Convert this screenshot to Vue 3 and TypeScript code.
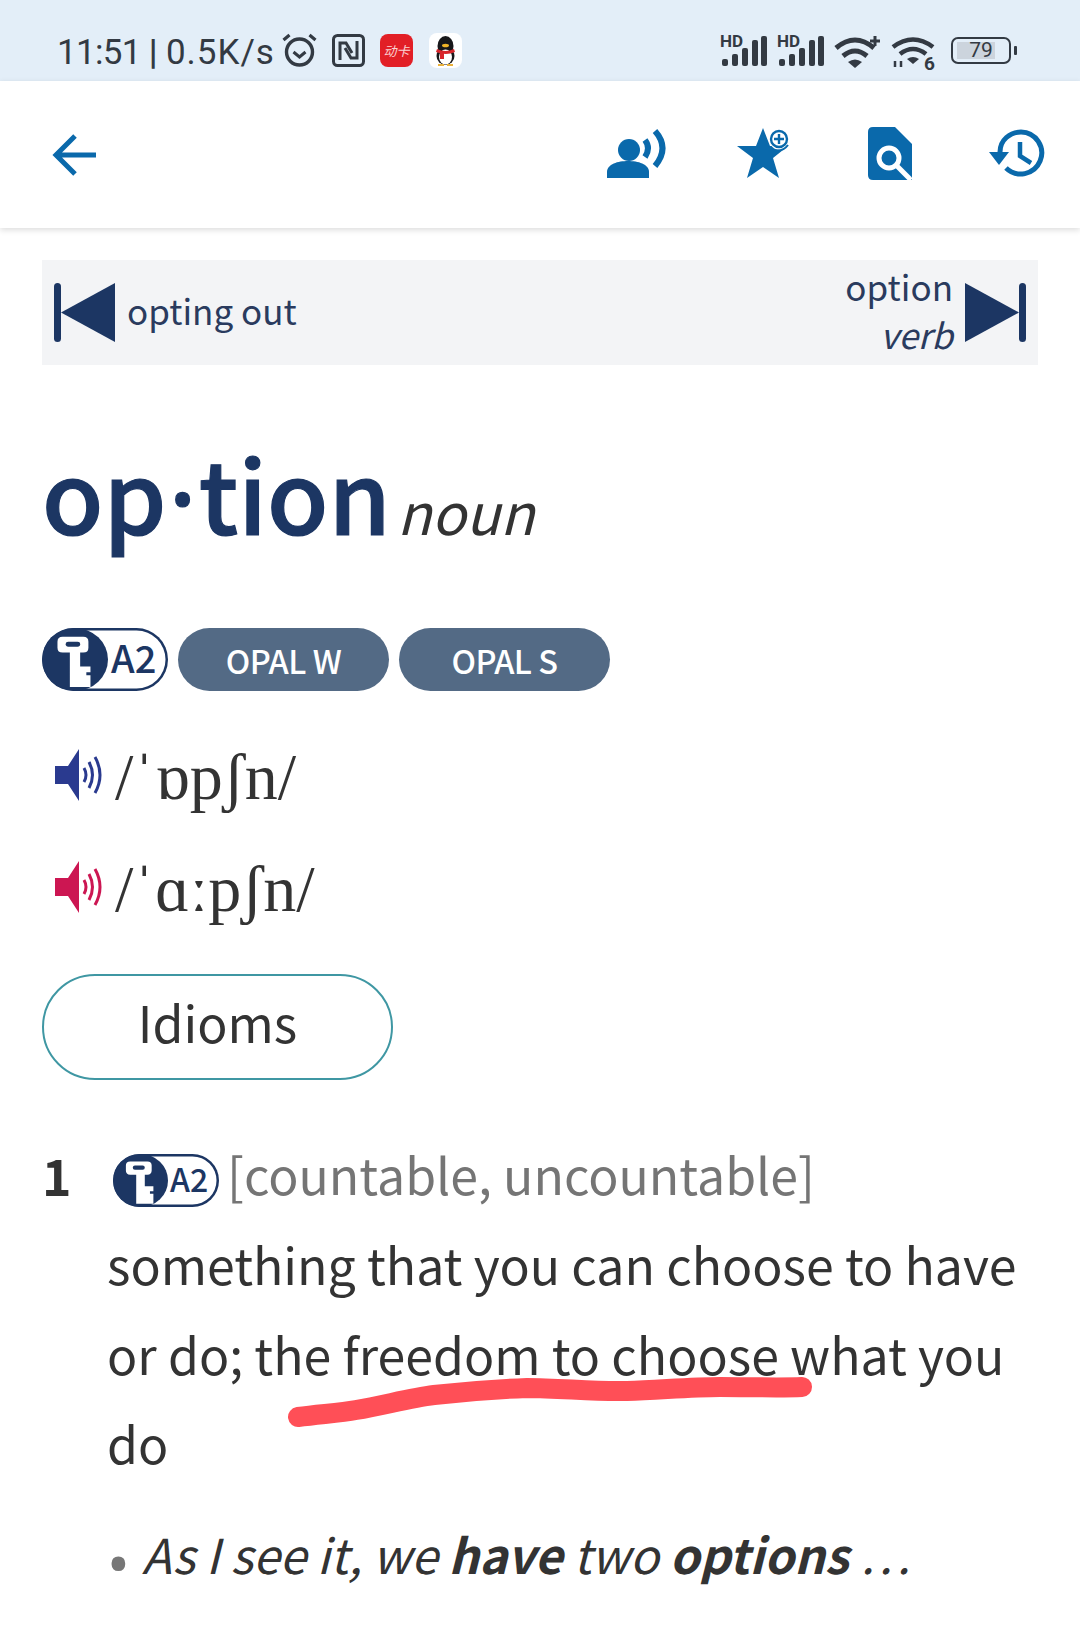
<script setup lang="ts">
const tags = ["OPAL W", "OPAL S"];

const prons = [
  { text: "/ˈɒpʃn/", color: "#2a3a8f" },
  { text: "/ˈɑːpʃn/", color: "#cc1652" },
];
</script>

<template>
  <div class="page">
    <div class="status">
      <span class="clock"><span class="time">11:51</span> <b>|</b> <span class="rate">0.5K/s</span></span>
      <svg class="alarm" width="37" height="36" viewBox="0 0 36 36" fill="none" stroke="#333a43">
        <circle cx="18" cy="20" r="13" stroke-width="3.4" />
        <path d="M12 20l6 5 6-5" stroke-width="3" />
        <path d="M2 8l6-5M34 8l-6-5" stroke-width="3.2" />
      </svg>
      <svg class="nfc" width="33" height="33" viewBox="0 0 33 33" fill="none" stroke="#333a43" stroke-width="3">
        <rect x="1.5" y="1.5" width="30" height="30" rx="4" />
        <path d="M8 26V9h6l6 10M25 7v17h-6l-6-10" />
      </svg>
      <span class="app-red">动卡</span>
      <svg class="qq" width="33" height="35" viewBox="0 0 33 35">
        <rect width="33" height="35" rx="8" fill="#fff" />
        <ellipse cx="16.5" cy="13" rx="8" ry="10" fill="#17171a" />
        <ellipse cx="16.5" cy="23" rx="9" ry="9" fill="#17171a" />
        <ellipse cx="16.5" cy="24" rx="6.5" ry="7.5" fill="#fff" />
        <path d="M8 16q8.500 4 17 0l1 3q-9 4-19 0z" fill="#d8252b" />
        <path d="M11 19h4v7h-4z" fill="#d8252b" />
        <ellipse cx="16.500" cy="12.500" rx="3.500" ry="1.800" fill="#f0b428" />
        <path d="M9 32h6M18 32h6" stroke="#e9b13b" stroke-width="2" />
      </svg>

      <div class="status-right">
        <svg class="signal" width="48" height="43" viewBox="0 -8 48 43">
          <text x="0" y="13" class="hd">HD</text>
          <g fill="#333a43">
            <rect x="2" y="25" width="6" height="7" rx="2" />
            <rect x="12" y="20" width="6" height="12" rx="2" />
            <rect x="22" y="14" width="6" height="18" rx="2" />
            <rect x="32" y="6" width="6" height="26" rx="2" />
            <rect x="41" y="2" width="6" height="30" rx="2" />
          </g>
        </svg>
        <svg class="signal" width="48" height="43" viewBox="0 -8 48 43">
          <text x="0" y="13" class="hd">HD</text>
          <g fill="#333a43">
            <rect x="2" y="25" width="6" height="7" rx="2" />
            <rect x="12" y="20" width="6" height="12" rx="2" />
            <rect x="22" y="14" width="6" height="18" rx="2" />
            <rect x="32" y="6" width="6" height="26" rx="2" />
            <rect x="41" y="2" width="6" height="30" rx="2" />
          </g>
        </svg>
        <svg width="48" height="35" viewBox="0 0 48 35" fill="none" stroke="#333a43" stroke-width="5">
          <path d="M2 14q19-16 38 0M9 22q12-10 24 0" />
          <path d="M14 28l7 6 7-6q-7-5-14 0z" fill="#333a43" stroke="none" />
          <path d="M41 2v10M36 7h10" stroke-width="3" />
        </svg>
        <svg width="46" height="44" viewBox="0 0 46 44" fill="none" stroke="#333a43" stroke-width="4.600">
          <path d="M2 13q20-15 40 0M9 20q13-10 26 0" />
          <path d="M16 25l6 5 6-5q-6-4-12 0z" fill="#333a43" stroke="none" />
          <path d="M4 27v6M10 27v6" stroke-width="2.500" />
          <text x="33" y="36" class="six">6</text>
        </svg>
        <div class="battery">
          <div class="battery-body"><span class="battery-fill"></span><span class="battery-num">79</span></div>
          <span class="battery-tip"></span>
        </div>
      </div>
    </div>

    <div class="toolbar">
      <svg class="back" width="44" height="42" viewBox="0 0 44 42" fill="none" stroke="#0a69ab" stroke-width="5">
        <path d="M44 21H5M23 2L4 21l19 19" />
      </svg>
      <svg class="tool-person" width="59" height="49" viewBox="0 0 59 49" fill="#0a69ab">
        <circle cx="22" cy="21" r="11" />
        <path d="M0 49v-6c0-8 11-11 21-11s21 3 21 11v6z" />
        <path d="M38 11q6 8 0 17M48 2q15 17 0 35" fill="none" stroke="#0a69ab" stroke-width="6" />
      </svg>
      <svg class="tool-star" width="53" height="51" viewBox="0 0 53 51" fill="#0a69ab">
        <path d="M26 0l7 18 18 0-15 12 6 20-16-11-16 11 6-20L0 18l19 0z" />
        <circle cx="43" cy="11" r="11" fill="#fff" />
        <path d="M36 22q10 2 15-5" fill="none" stroke="#0a69ab" stroke-width="2" />
        <circle cx="42" cy="11" r="8" fill="#fff" stroke="#0a69ab" stroke-width="2.400" />
        <path d="M42 6v10M37 11h10" stroke="#0a69ab" stroke-width="2.400" />
      </svg>
      <svg class="tool-doc" width="44" height="53" viewBox="0 0 44 53">
        <path d="M5 0h22l17 17v36H5q-5 0-5-5V5q0-5 5-5z" fill="#0a69ab" />
        <circle cx="21" cy="31" r="10" fill="#0a69ab" stroke="#fff" stroke-width="5" />
        <path d="M28 38l15 15" stroke="#fff" stroke-width="5" />
      </svg>
      <svg class="tool-history" width="56" height="49" viewBox="0 0 56 49" fill="none" stroke="#0a69ab" stroke-width="5">
        <path d="M11 23C11 11 21 3 32 3a21 21 0 1 1-15 36" />
        <path d="M0 23h20l-10 13z" fill="#0a69ab" stroke="none" />
        <path d="M31 13v14l11 7" stroke-width="4.500" />
      </svg>
    </div>

    <div class="content">
      <div class="nav">
        <div class="nav-side">
          <svg width="61" height="59" viewBox="0 0 61 59" fill="#1c3663">
            <rect width="7" height="59" rx="3.500" />
            <path d="M61 0v59L7 29.500z" />
          </svg>
          <span class="nav-left-text">opting out</span>
        </div>
        <div class="nav-side">
          <div class="nav-right-text">
            <div>option</div>
            <div class="it">verb</div>
          </div>
          <svg width="61" height="59" viewBox="0 0 61 59" fill="#1c3663">
            <rect x="54" width="7" height="59" rx="3.500" />
            <path d="M0 0v59l54-29.500z" />
          </svg>
        </div>
      </div>

      <div class="headword">
        <h1>op<span class="dot">·</span>tion</h1>
        <span class="pos">noun</span>
      </div>

      <div class="tags">
        <span class="level">
          <svg class="level-key" viewBox="0 0 64 64" preserveAspectRatio="none">
            <circle cx="32" cy="32" r="32" fill="#1c3663" />
            <path d="M20 9h20q5 0 5 5v6q0 5-5 5h-3v14h10v6h-4v3h4v12H27V25h-7q-5 0-5-5v-6q0-5 5-5z" fill="#fff" />
            <rect x="23" y="14" width="14" height="5" rx="2.500" fill="#1c3663" />
          </svg>
          <span class="level-text">A2</span>
        </span>
        <span v-for="tag in tags" :key="tag" class="tag">{{ tag }}</span>
      </div>

      <div v-for="p in prons" :key="p.text" class="pron">
        <svg width="52" height="52" viewBox="0 0 50 52" fill="none" :stroke="p.color">
          <path d="M0 17h13L24 0v52L13 35H0z" :fill="p.color" stroke="none" />
          <path d="M29 19q4 7 0 14M34 13q7 13 0 26M40 8q10 18 0 36" stroke-width="3" />
        </svg>
        <span class="ipa">{{ p.text }}</span>
      </div>

      <div class="idioms">Idioms</div>

      <div class="sense">
        <span class="sense-num">1</span>
        <div class="sense-body">
          <div class="sense-head">
            <span class="level small">
              <svg class="level-key" viewBox="0 0 64 64" preserveAspectRatio="none">
                <circle cx="32" cy="32" r="32" fill="#1c3663" />
                <path d="M20 9h20q5 0 5 5v6q0 5-5 5h-3v14h10v6h-4v3h4v12H27V25h-7q-5 0-5-5v-6q0-5 5-5z" fill="#fff" />
                <rect x="23" y="14" width="14" height="5" rx="2.500" fill="#1c3663" />
              </svg>
              <span class="level-text">A2</span>
            </span>
            <span class="grammar">[countable, uncountable]</span>
          </div>
          <p class="def">something that you can choose to have or do; the freedom to choose what you do</p>
          <p class="example">
            <span class="bullet">•</span>
            <span class="it">As I see it, we <b>have</b> two <b>options</b> …</span>
          </p>
        </div>
      </div>
    </div>

    <svg class="scribble" width="1080" height="1636" viewBox="0 0 1080 1636" fill="none">
      <path d="M298 1417C320 1414 340 1413 356 1410C385 1405 410 1398 434 1395C470 1391 500 1389 527 1388C560 1388 595 1392 627 1391C660 1390 690 1387 720 1387C750 1387 780 1388 802 1387" stroke="#ff4f57" stroke-width="20" stroke-linecap="round" />
    </svg>
  </div>
</template>

<style scoped>
.page {
  position: relative;
  width: 1080px;
  height: 1636px;
  overflow: hidden;
  background: #fff;
  font-family: "Noto Sans CJK SC", "Noto Sans", sans-serif;
  color: #333;
}
.status {
  height: 81px;
  box-sizing: border-box;
  padding: 32px 63px 0 57px;
  background: #e3eef8;
  display: flex;
  align-items: flex-start;
}
.clock {
  font-family: Roboto, sans-serif;
  font-size: 35px;
  line-height: 36px;
  margin-top: 3px;
  word-spacing: -0.500px;
  color: #333a43;
  white-space: nowrap;
}
.time {
  letter-spacing: -0.700px;
}
.rate {
  letter-spacing: 1px;
}
.clock b {
  font-weight: 700;
}
.alarm {
  margin-left: 6px;
}
.nfc {
  margin-left: 14px;
  margin-top: 2px;
}
.app-red {
  width: 33px;
  height: 33px;
  margin-left: 15px;
  margin-top: 2px;
  border-radius: 8px;
  background: #e21f26;
  color: #fbd4d4;
  font-size: 13px;
  line-height: 33px;
  text-align: center;
  font-style: italic;
  white-space: nowrap;
  overflow: hidden;
}
.qq {
  margin-left: 16px;
  margin-top: 1px;
}
.status-right {
  margin-left: auto;
  margin-top: 2px;
  display: flex;
  gap: 9px;
  align-items: flex-start;
}
.signal {
  margin-top: -8px;
}
.hd {
  font-family: Roboto, sans-serif;
  font-size: 17px;
  font-weight: 700;
  fill: #333a43;
}
.six {
  font-family: Roboto, sans-serif;
  font-size: 19px;
  font-weight: 700;
  fill: #333a43;
  stroke: none;
}
.battery {
  display: flex;
  align-items: center;
  margin-left: 5px;
  margin-top: 3px;
}
.battery-body {
  position: relative;
  width: 60px;
  height: 27px;
  box-sizing: border-box;
  border: 2.500px solid #333a43;
  border-radius: 7px;
}
.battery-fill {
  position: absolute;
  left: 4px;
  top: 3px;
  bottom: 3px;
  width: 38px;
  background: #ccd4dd;
}
.battery-num {
  position: absolute;
  left: 0;
  right: 0;
  text-align: center;
  font-family: Roboto, sans-serif;
  font-size: 21px;
  line-height: 22px;
  color: #333a43;
}
.battery-tip {
  width: 3px;
  height: 9px;
  margin-left: 3px;
  border-radius: 1px;
  background: #333a43;
}
.toolbar {
  height: 147px;
  box-sizing: border-box;
  background: #fff;
  box-shadow: 0 2px 6px rgba(0, 0, 0, 0.14);
  position: relative;
  display: flex;
  align-items: center;
  padding: 0 35px 0 52px;
}
.tool-person {
  margin-left: auto;
  margin-top: -3px;
}
.tool-star {
  margin-left: 71px;
  margin-top: -3px;
}
.tool-doc {
  margin-left: 78px;
  margin-top: -2px;
}
.tool-history {
  margin-left: 77px;
  margin-top: -2px;
}
.content {
  padding: 32px 42px 0;
}
.nav {
  height: 105px;
  background: #f3f4f6;
  display: flex;
  justify-content: space-between;
  align-items: center;
  padding: 0 12px;
  color: #2a3b5e;
  font-size: 35px;
}
.nav-side {
  display: flex;
  align-items: center;
  gap: 12px;
}
.nav-left-text {
  line-height: 48px;
  margin-bottom: 6px;
}
.nav-right-text {
  text-align: right;
  line-height: 48px;
  margin-bottom: 5px;
}
.it {
  font-style: italic;
}
.headword {
  display: flex;
  align-items: baseline;
  gap: 6px;
  margin-top: 73px;
  height: 108px;
  white-space: nowrap;
}
h1 {
  margin: 0;
  font-size: 100px;
  line-height: 108px;
  font-weight: 500;
  color: #1c3663;
  -webkit-text-stroke: 1.200px #1c3663;
}
.dot {
  font-family: "Noto Sans", sans-serif;
  padding: 0 2.500px;
}
.pos {
  font-size: 56.500px;
  font-style: italic;
  color: #333;
}
.tags {
  display: flex;
  gap: 10px;
  margin-top: 82px;
}
.level {
  width: 126px;
  height: 63px;
  box-shadow: inset 0 0 0 2.500px #1c3663;
  border-radius: 32px;
  display: flex;
  align-items: center;
  overflow: hidden;
  color: #1c3663;
}
.level-key {
  width: 66px;
  height: 63px;
  flex: none;
}
.level-text {
  margin-left: 3px;
  margin-bottom: 5px;
  font-size: 38px;
  line-height: 58px;
  font-weight: 500;
}
.tag {
  width: 211px;
  height: 63px;
  border-radius: 32px;
  background: #536a85;
  color: #fff;
  font-size: 32.500px;
  letter-spacing: -0.500px;
  font-weight: 500;
  line-height: 63px;
  text-align: center;
}
.pron {
  display: flex;
  align-items: flex-start;
  gap: 9px;
  height: 112px;
  padding-left: 12px;
}
.tags + .pron {
  margin-top: 58px;
}
.ipa {
  font-family: "Liberation Serif", serif;
  font-size: 66px;
  line-height: 60px;
  margin-top: -2px;
  color: #333;
}
.idioms {
  width: 351px;
  height: 106px;
  box-sizing: border-box;
  border: 2px solid #3f97a3;
  border-radius: 53px;
  margin-top: 1px;
  text-align: center;
  font-size: 50px;
  line-height: 90px;
  color: #333;
}
.sense {
  display: grid;
  grid-template-columns: 65px 1fr;
  margin-top: 73px;
}
.sense-num {
  margin-top: -6px;
  font-size: 50px;
  font-weight: 700;
  line-height: 54px;
}
.sense-head {
  display: flex;
  align-items: center;
  gap: 8px;
  height: 54px;
  padding-left: 6px;
}
.level.small {
  width: 106px;
  height: 53px;
  flex: none;
}
.level.small .level-key {
  width: 55px;
  height: 53px;
}
.level.small .level-text {
  font-size: 32px;
  line-height: 48px;
  margin-left: 2px;
  margin-bottom: 5px;
}
.grammar {
  font-size: 50px;
  line-height: 54px;
  margin-bottom: 14px;
  color: #757575;
  white-space: nowrap;
}
.def {
  margin: 12px 0 0;
  font-size: 50px;
  line-height: 89.600px;
  color: #333;
}
.example {
  margin: 25px 0 0;
  display: flex;
  font-size: 48px;
  line-height: 80px;
  white-space: nowrap;
}
.bullet {
  font-family: Roboto, sans-serif;
  font-size: 68px;
  margin-top: 13px;
  width: 35px;
  color: #777;
}
.scribble {
  position: absolute;
  left: 0;
  top: 0;
  pointer-events: none;
}
</style>
